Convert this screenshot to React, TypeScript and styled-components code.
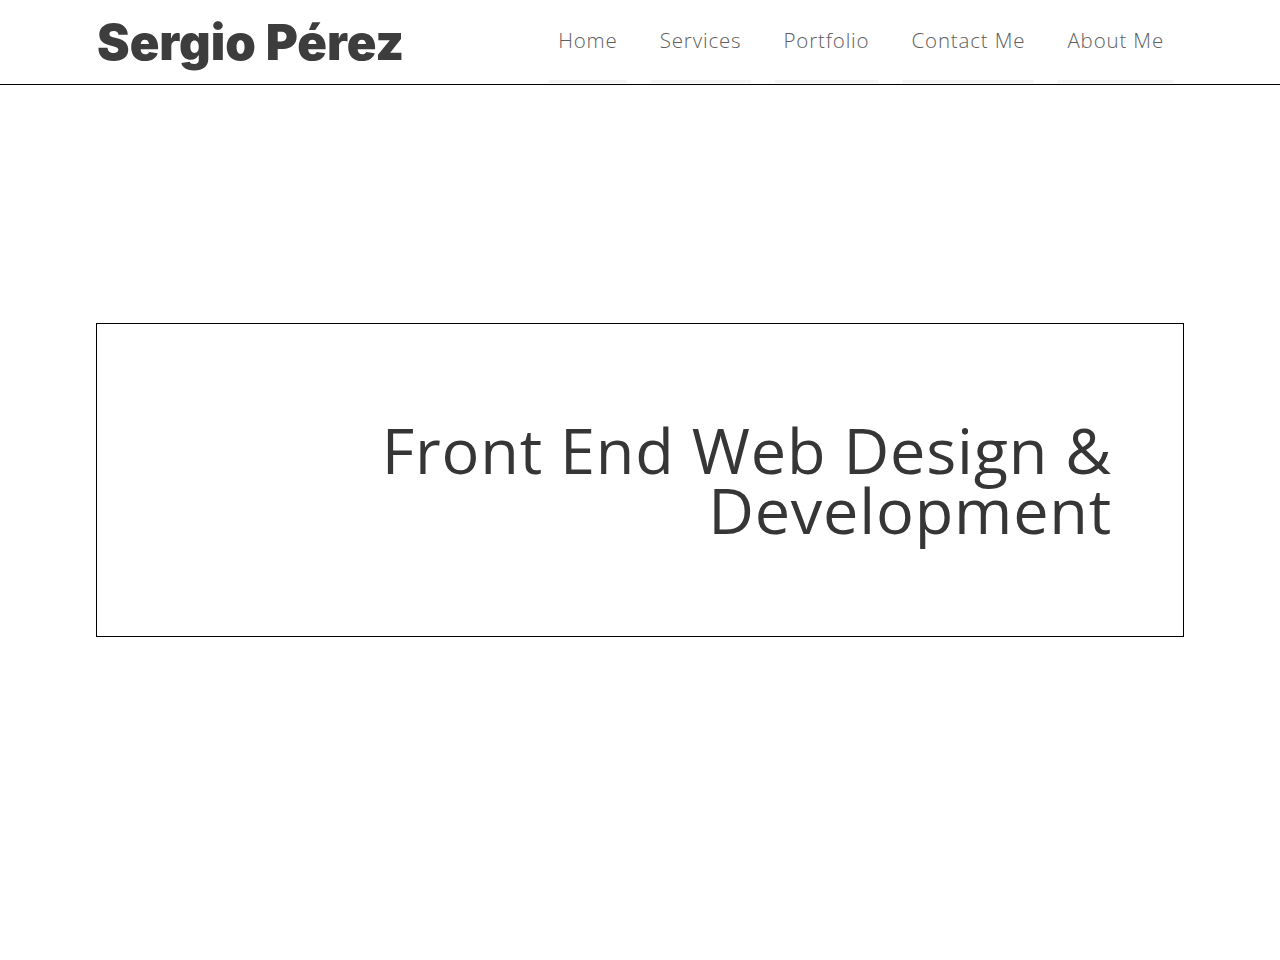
import React from "react";
import styled, { createGlobalStyle } from "styled-components";

const GlobalStyle = createGlobalStyle`
  html, body { margin: 0; padding: 0; background: #ffffff; }
  body { font-family: "Open Sans", "Liberation Sans", sans-serif; }
  * { box-sizing: border-box; }
`;

const Header = styled.header`
  width: 100%;
  height: 85px;
  border-bottom: 1px solid #000000;
`;

const HeaderInner = styled.div`
  width: 1088px;
  height: 84px;
  margin: 0 auto;
  display: flex;
  align-items: center;
  justify-content: space-between;
`;

const Logo = styled.a`
  font-family: "Inter", "Open Sans", sans-serif;
  font-weight: 900;
  font-size: 49px;
  letter-spacing: 0px;
  color: #3d3d3d;
  text-decoration: none;
  margin-left: 1px;
  line-height: 1;
`;

const Nav = styled.nav`
  display: flex;
  align-self: flex-start;
  gap: 24px;
  margin-right: 11px;
`;

const NavItem = styled.a`
  display: flex;
  align-items: center;
  justify-content: center;
  height: 83px;
  padding: 0 9px;
  border-bottom: 3px solid #f4f4f4;
  font-family: "Open Sans", sans-serif;
  font-weight: 300;
  font-size: 20.5px;
  letter-spacing: 0.85px;
  color: #5e5e5e;
  text-decoration: none;
`;

const Main = styled.main`
  padding-top: 238px;
`;

const HeroBox = styled.section`
  width: 1088px;
  height: 314px;
  margin: 0 auto;
  border: 1px solid #000000;
  display: flex;
  flex-direction: column;
  justify-content: center;
  padding-right: 71px;
`;

const HeroTitle = styled.h1`
  margin: 0;
  text-align: right;
  font-family: "Open Sans", sans-serif;
  font-weight: 400;
  font-size: 63px;
  letter-spacing: 0.8px;
  line-height: 60px;
  color: #363636;
`;

const links = ["Home", "Services", "Portfolio", "Contact Me", "About Me"];

export default function App() {
  return (
    <>
      <GlobalStyle />
      <Header>
        <HeaderInner>
          <Logo href="#">Sergio Pérez</Logo>
          <Nav>
            {links.map((l) => (
              <NavItem key={l} href="#">
                {l}
              </NavItem>
            ))}
          </Nav>
        </HeaderInner>
      </Header>
      <Main>
        <HeroBox>
          <HeroTitle>
            Front End Web Design &amp;
            <br />
            Development
          </HeroTitle>
        </HeroBox>
      </Main>
    </>
  );
}
